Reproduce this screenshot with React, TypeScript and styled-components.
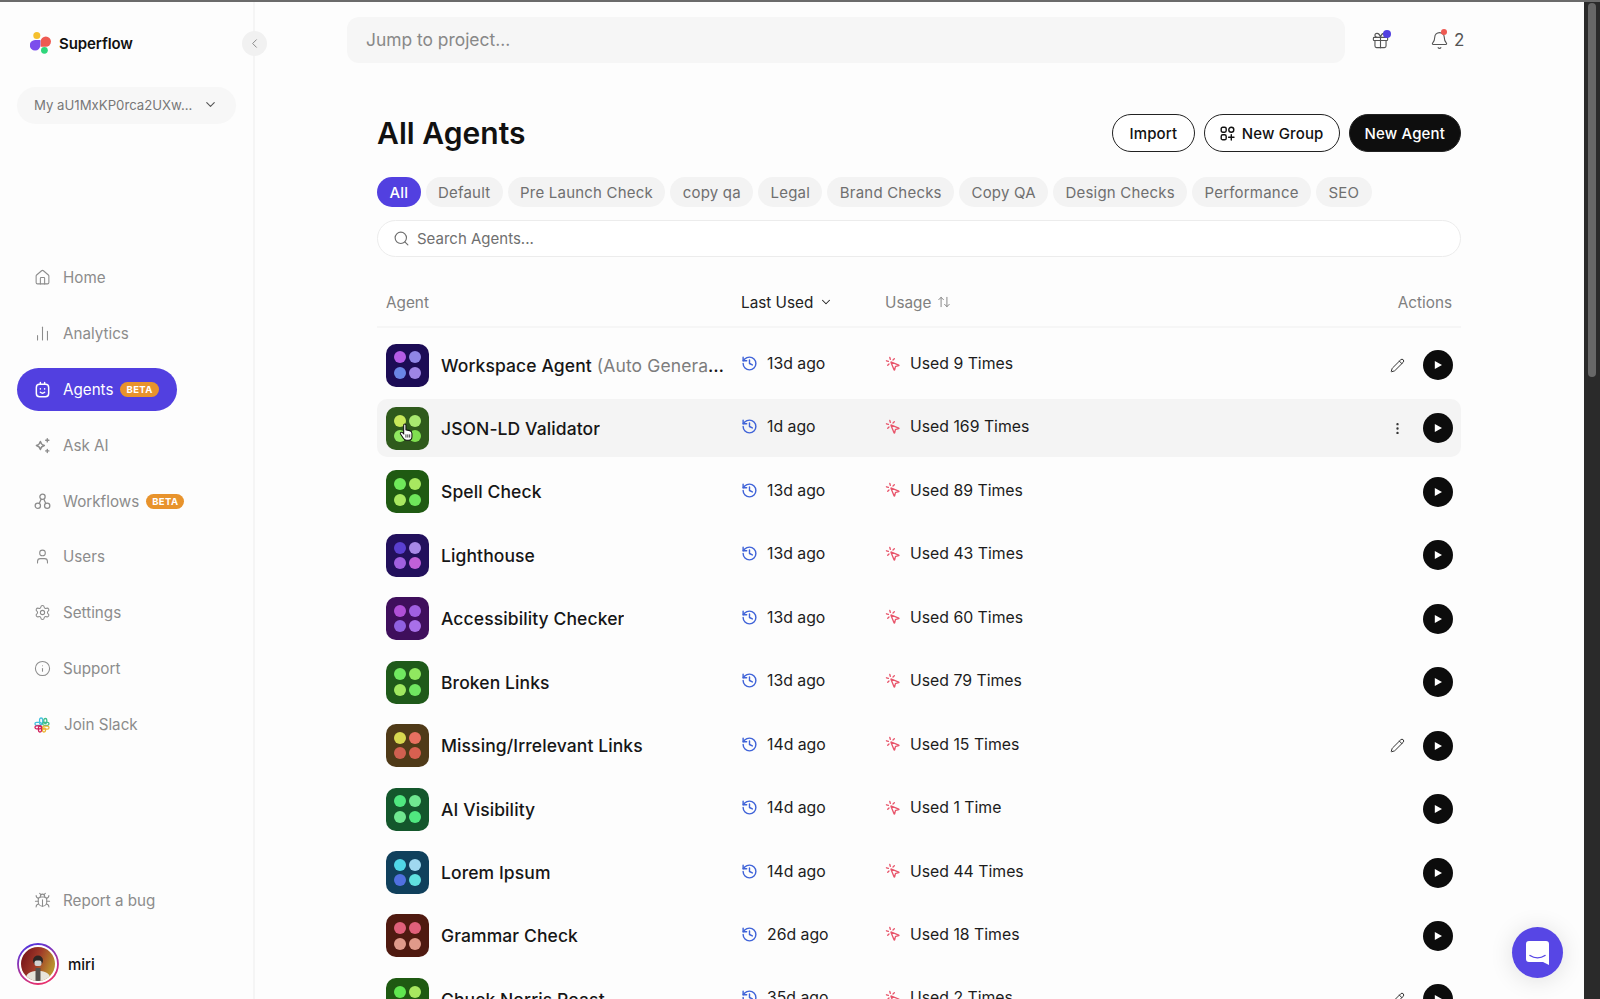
import React from 'react';
import styled, { createGlobalStyle } from 'styled-components';
import {
  House,
  ChartNoAxesColumn,
  User,
  Settings,
  Info,
  Bug,
  History,
  MousePointerClick,
  Pencil,
  EllipsisVertical,
  Search,
  ChevronDown,
  ChevronLeft,
  ArrowUpDown,
  Gift,
  Bell,
} from 'lucide-react';

const FONT = '"Inter", "Noto Sans", sans-serif';

const GlobalStyle = createGlobalStyle`
  html, body {
    margin: 0;
    height: 100%;
    overflow: hidden;
    background: #fdfdfd;
    font-family: ${FONT};
  }
  * { box-sizing: border-box; }
`;

const TopLine = styled.div`
  height: 2px;
  background: #6b6b6b;
`;

const Page = styled.div`
  display: flex;
  height: 997px;
  overflow: hidden;
`;

const Sidebar = styled.aside`
  position: relative;
  flex: 0 0 255px;
  display: flex;
  flex-direction: column;
  padding: 29px 0 14px 17px;
  border-right: 2px solid #f5f5f5;
`;

const Brand = styled.div`
  display: flex;
  align-items: center;
  gap: 7px;
  height: 24px;
  padding-left: 13px;
  font-size: 15px;
  font-weight: 600;
  letter-spacing: -0.1px;
  color: #111;
`;

const CollapseButton = styled.button`
  position: absolute;
  top: 29px;
  right: -14px;
  width: 25px;
  height: 25px;
  padding: 0;
  border: 0;
  border-radius: 50%;
  background: #f1f1f1;
  color: #8a8a8a;
  display: flex;
  align-items: center;
  justify-content: center;
`;

const WorkspaceSelect = styled.div`
  display: flex;
  align-items: center;
  justify-content: space-between;
  width: 219px;
  height: 37px;
  margin-top: 32px;
  padding: 0 18px 2px 17px;
  border-radius: 19px;
  background: #f7f7f7;
  font-size: 13.2px;
  color: #777;
`;

const Nav = styled.nav`
  display: flex;
  flex-direction: column;
  gap: 12.9px;
  margin-top: 132px;
`;

const NavItem = styled.div<{ $active?: boolean; $slack?: boolean }>`
  display: flex;
  align-items: center;
  gap: ${p => (p.$slack ? '14px' : '12px')};
  width: ${p => (p.$active ? '160px' : '219px')};
  height: 43px;
  padding-left: 17px;
  border-radius: 22px;
  font-size: 15.2px;
  color: ${p => (p.$active ? '#fff' : '#8c8c8c')};
  background: ${p => (p.$active ? '#5240e0' : 'transparent')};
`;

const BetaBadge = styled.span`
  display: inline-flex;
  align-items: center;
  height: 15px;
  margin-left: -5px;
  padding: 0 6px;
  border-radius: 8px;
  background: #e8932c;
  color: #fff;
  font-size: 9.5px;
  font-weight: 700;
  letter-spacing: 0.4px;
`;

const SideFooter = styled.div`
  margin-top: auto;
  display: flex;
  flex-direction: column;
  gap: 21px;
`;

const Profile = styled.div`
  display: flex;
  align-items: center;
  gap: 9px;
  font-size: 15px;
  font-weight: 500;
  color: #111;
`;

const Main = styled.main`
  flex: 1;
  min-width: 0;
  overflow: hidden;
`;

const TopBar = styled.div`
  display: flex;
  align-items: center;
  margin-top: 15px;
  padding-left: 92px;
`;

const JumpInput = styled.div`
  display: flex;
  align-items: center;
  width: 998px;
  height: 46px;
  padding: 0 0 2px 19px;
  border-radius: 12px;
  background: #f6f6f6;
  font-size: 17.4px;
  color: #888;
`;

const TopIcon = styled.div`
  position: relative;
  display: flex;
  align-items: center;
  color: #555;
`;

const GiftWrap = styled(TopIcon)`
  margin-left: 26px;
`;

const BellWrap = styled(TopIcon)`
  margin-left: 40px;
  gap: 5px;
  font-size: 17px;
`;

const Dot = styled.span<{ $color: string; $size: number }>`
  position: absolute;
  top: -1px;
  right: ${p => (p.$size > 7 ? '-1px' : 'auto')};
  left: ${p => (p.$size > 7 ? 'auto' : '11px')};
  width: ${p => p.$size}px;
  height: ${p => p.$size}px;
  border-radius: 50%;
  background: ${p => p.$color};
`;

const Content = styled.div`
  padding: 0 123px 0 122px;
`;

const HeaderRow = styled.div`
  display: flex;
  align-items: center;
  justify-content: space-between;
  margin-top: 51px;
`;

const Title = styled.h1`
  margin: 0;
  font-size: 30px;
  font-weight: 600;
  letter-spacing: 0.05px;
  color: #111;
`;

const ButtonRow = styled.div`
  display: flex;
  gap: 9px;
`;

const PillButton = styled.button<{ $dark?: boolean }>`
  display: flex;
  align-items: center;
  gap: 7px;
  height: 38px;
  padding: 0 15px;
  border: 1px solid #222;
  border-radius: 19px;
  background: ${p => (p.$dark ? '#0e0e0e' : '#fff')};
  color: ${p => (p.$dark ? '#fff' : '#111')};
  font-family: ${FONT};
  font-size: 15px;
  font-weight: 500;
  letter-spacing: 0.15px;
`;

const ImportButton = styled(PillButton)`
  padding: 0 16.5px;
`;

const Tabs = styled.div`
  display: flex;
  gap: 5px;
  margin-top: 25px;
`;

const Tab = styled.div<{ $active?: boolean }>`
  display: flex;
  align-items: center;
  height: 30px;
  padding: 0 12.4px;
  border-radius: 15px;
  background: ${p => (p.$active ? '#5240e0' : '#f3f3f3')};
  color: ${p => (p.$active ? '#fff' : '#6f6f6f')};
  font-size: 15px;
  letter-spacing: 0.2px;
  font-weight: ${p => (p.$active ? 500 : 400)};
`;

const SearchBox = styled.div`
  display: flex;
  align-items: center;
  gap: 7px;
  height: 37px;
  margin-top: 13px;
  padding-left: 15px;
  border: 1px solid #ececec;
  border-radius: 19px;
  background: #fff;
  font-size: 15px;
  color: #6f6f6f;
`;

const TableHead = styled.div`
  display: grid;
  grid-template-columns: 355px 144px 1fr auto;
  align-items: center;
  height: 50px;
  margin-top: 21px;
  padding: 0 9px;
  border-bottom: 2px solid #f6f6f6;
  font-size: 15.3px;
`;

const HeadCell = styled.div<{ $strong?: boolean }>`
  display: flex;
  align-items: center;
  gap: 6px;
  color: ${p => (p.$strong ? '#222' : '#808080')};
`;

const Rows = styled.div`
  display: flex;
  flex-direction: column;
  gap: 5.44px;
  margin-top: 8px;
`;

const Row = styled.div<{ $hover?: boolean }>`
  position: relative;
  display: grid;
  grid-template-columns: 355px 144px 1fr auto;
  align-items: center;
  flex: 0 0 58px;
  padding: 0 8px 0 9px;
  border-radius: 10px;
  background: ${p => (p.$hover ? '#f4f4f4' : 'transparent')};
`;

const AgentCell = styled.div`
  display: flex;
  align-items: center;
  gap: 12px;
  min-width: 0;
  padding-right: 16px;
`;

const AgentIcon = styled.div<{ $bg: string }>`
  flex: 0 0 43px;
  height: 43px;
  display: grid;
  grid-template-columns: 15.4px 15.4px;
  grid-auto-rows: 15.4px;
  place-content: center;
  border-radius: 10px;
  background: ${p => p.$bg};
`;

const IconDot = styled.span<{ $color: string }>`
  width: 12px;
  height: 12px;
  margin: 1.7px;
  border-radius: 50%;
  background: ${p => p.$color};
`;

const AgentName = styled.div`
  overflow: hidden;
  white-space: nowrap;
  text-overflow: ellipsis;
  font-size: 17.5px;
  font-weight: 500;
  letter-spacing: 0.1px;
  color: #161616;
`;

const AutoNote = styled.span`
  font-weight: 400;
  color: #7d7d7d;
`;

const Stat = styled.div<{ $tone: string }>`
  display: flex;
  align-items: center;
  gap: 9px;
  margin-top: -3px;
  font-size: 15.8px;
  color: #1c1c1c;
  svg { color: ${p => p.$tone}; flex: none; }
`;

const Actions = styled.div`
  display: flex;
  align-items: center;
  justify-content: flex-end;
  gap: 18px;
  color: #333;
`;

const PlayButton = styled.button`
  display: flex;
  align-items: center;
  justify-content: center;
  width: 30px;
  height: 30px;
  padding: 0;
  border: 0;
  border-radius: 50%;
  background: #0c0c0c;
`;

const Pointer = styled.svg`
  position: absolute;
  left: 22px;
  top: 24px;
`;

const ScrollTrack = styled.div`
  flex: 0 0 16px;
  padding: 1px 4px 0;
  background: #2a2a2a;
`;

const ScrollThumb = styled.div`
  height: 374px;
  border-radius: 4px;
  background: #676767;
`;

const ChatBubble = styled.div`
  position: absolute;
  left: 1512px;
  top: 927px;
  width: 51px;
  height: 51px;
  display: flex;
  align-items: center;
  justify-content: center;
  border-radius: 50%;
  background: #5746e5;
  box-shadow: 0 2px 24px rgba(0, 0, 0, 0.12);
`;

const Logo = () => (
  <svg width="22" height="22" viewBox="0 0 22 22">
    <circle cx="6.8" cy="3.6" r="3.5" fill="#f5c02e" />
    <path d="M10.600 9.600a5.200 5.200 0 1 1 5.200 5.200h-5.200z" fill="#ee5a52" />
    <path d="M10.400 8v5.300a5.300 5.300 0 1 1-5.300-5.300z" fill="#7c4dec" />
    <circle cx="14.400" cy="18.300" r="3.400" fill="#2fd67b" />
  </svg>
);

const AgentFace = () => (
  <svg width="17" height="17" viewBox="0 0 16 16" fill="none" stroke="currentColor" strokeWidth="1.4" strokeLinecap="round">
    <rect x="2.2" y="3" width="11.6" height="11.8" rx="3" />
    <path d="M6 1.3v1.7M10 1.3v1.7" />
    <path d="M6 10.6c1.2 1 2.8 1 4 0" />
    <path d="M6 7.4v.2M10 7.4v.2" />
  </svg>
);

const SparkIcon = () => (
  <svg width="17" height="17" viewBox="0 0 16 16" fill="none" stroke="currentColor" strokeWidth="1.3" strokeLinejoin="round" strokeLinecap="round">
    <path d="M6 4.200c.5 2.400 1.300 3.200 3.800 3.800-2.500.6-3.300 1.400-3.800 3.800-.5-2.400-1.300-3.200-3.800-3.800 2.500-.6 3.300-1.400 3.800-3.800z" />
    <path d="M12.500 1.600v3M11 3.100h3M12.500 11.600v3M11 13.100h3" />
  </svg>
);

const WorkflowIcon = () => (
  <svg width="17" height="17" viewBox="0 0 16 16" fill="none" stroke="currentColor" strokeWidth="1.2">
    <circle cx="8" cy="3.6" r="2.5" />
    <circle cx="3.6" cy="12" r="2.5" />
    <circle cx="12.4" cy="12" r="2.5" />
    <path d="M6.7 5.8 4.9 9.8M9.3 5.800l1.800 4" />
  </svg>
);

const SlackIcon = () => (
  <svg width="16" height="16" viewBox="0 0 16 16" fill="none" strokeWidth="1.3">
    <rect x="5.600" y="1" width="3" height="6.500" rx="1.500" stroke="#43c0dd" />
    <rect x="1" y="5.300" width="6.500" height="3" rx="1.500" stroke="#43c0dd" />
    <rect x="8.700" y="5.300" width="6.300" height="3" rx="1.500" stroke="#3ebd8c" />
    <rect x="9.800" y="1.500" width="3" height="5" rx="1.500" stroke="#3ebd8c" />
    <rect x="8.500" y="9.200" width="6.500" height="3" rx="1.500" stroke="#ecb22e" />
    <rect x="8.500" y="11" width="3" height="4" rx="1.500" stroke="#ecb22e" />
    <rect x="1" y="8.800" width="6.500" height="3" rx="1.500" stroke="#d11f5c" />
    <rect x="4.500" y="9" width="3" height="6" rx="1.500" stroke="#d11f5c" />
  </svg>
);

const Avatar = () => (
  <svg width="42" height="42" viewBox="0 0 42 42">
    <defs>
      <linearGradient id="ring" x1="0.2" y1="0" x2="0.6" y2="1">
        <stop offset="0" stopColor="#4f35e0" />
        <stop offset="1" stopColor="#e8306c" />
      </linearGradient>
      <linearGradient id="photo" x1="0" y1="0" x2="1" y2="0.4">
        <stop offset="0" stopColor="#6e0d16" />
        <stop offset="0.55" stopColor="#a03a28" />
        <stop offset="1" stopColor="#b9902e" />
      </linearGradient>
      <clipPath id="photoClip">
        <circle cx="21" cy="21" r="17" />
      </clipPath>
    </defs>
    <circle cx="21" cy="21" r="20" fill="#fff" stroke="url(#ring)" strokeWidth="1.8" />
    <circle cx="21" cy="21" r="17" fill="url(#photo)" />
    <g clipPath="url(#photoClip)">
      <path d="M8 40c0-9 4-12 13-12s13 3 13 12z" fill="#e8e4da" />
      <rect x="18.500" y="25" width="5" height="15" fill="#55504c" />
      <circle cx="21" cy="17.500" r="5" fill="#2e2624" />
      <rect x="17.500" y="17.500" width="7" height="5.500" rx="2" fill="#d2d2d2" />
    </g>
  </svg>
);

const GroupIcon = () => (
  <svg width="15" height="15" viewBox="0 0 15 15" fill="none" stroke="currentColor" strokeWidth="1.4" strokeLinecap="round">
    <rect x="1.2" y="1.2" width="5" height="5" rx="1.6" />
    <rect x="8.8" y="1.2" width="5" height="5" rx="2.5" />
    <rect x="1.2" y="8.8" width="5" height="5" rx="1.6" />
    <path d="M11.3 8.6v5.4M8.6 11.3H14" />
  </svg>
);

const PlayGlyph = () => (
  <svg width="10" height="10" viewBox="0 0 10 10">
    <path d="M1.8 1 9 5l-7.2 4z" fill="#fff" />
  </svg>
);

const HandPointer = () => (
  <Pointer width="15" height="19" viewBox="0 0 16 20">
    <path
      d="M5 2.200c0-1.600 2.400-1.600 2.400 0v5l4 .8c1.600.4 2.400 1.200 2.400 3v3.400c0 2.200-1.400 3.800-3.600 3.800H8c-1.400 0-2.400-.6-3.200-1.800L1.600 11.600c-.8-1.400 1-2.600 2.200-1.400L5 11.400z"
      fill="#fff"
      stroke="#111"
      strokeWidth="1.1"
    />
    <path d="M7.400 12v3.400M9.400 12v3.400M11.400 12v3.400" stroke="#111" strokeWidth="0.9" />
  </Pointer>
);

const ChatGlyph = () => (
  <svg width="25" height="26" viewBox="0 0 25 26">
    <path d="M4 1h17a3 3 0 0 1 3 3v21l-6-3H4a3 3 0 0 1-3-3V4a3 3 0 0 1 3-3z" fill="#fff" />
    <path d="M5 15.500c4.500 3 10.500 3 15 0" fill="none" stroke="#5746e5" strokeWidth="1.500" strokeLinecap="round" />
  </svg>
);

type NavEntry = { label: string; icon: React.ReactNode; beta?: boolean; active?: boolean; slack?: boolean };

const navIcon = { size: 17, strokeWidth: 1.5 };

const navEntries: NavEntry[] = [
  { label: 'Home', icon: <House {...navIcon} /> },
  { label: 'Analytics', icon: <ChartNoAxesColumn {...navIcon} /> },
  { label: 'Agents', icon: <AgentFace />, beta: true, active: true },
  { label: 'Ask AI', icon: <SparkIcon /> },
  { label: 'Workflows', icon: <WorkflowIcon />, beta: true },
  { label: 'Users', icon: <User {...navIcon} /> },
  { label: 'Settings', icon: <Settings {...navIcon} /> },
  { label: 'Support', icon: <Info {...navIcon} /> },
  { label: 'Join Slack', icon: <SlackIcon />, slack: true },
];

const tabs = ['All', 'Default', 'Pre Launch Check', 'copy qa', 'Legal', 'Brand Checks', 'Copy QA', 'Design Checks', 'Performance', 'SEO'];

type Agent = {
  name: string;
  note?: string;
  when: string;
  used: string;
  bg: string;
  dots: [string, string, string, string];
  action?: 'edit' | 'more';
};

const agents: Agent[] = [
  { name: 'Workspace Agent', note: ' (Auto Generated)', when: '13d ago', used: 'Used 9 Times', bg: '#1c0c55', dots: ['#b45ce6', '#8f86e5', '#6a85e5', '#9e85e5'], action: 'edit' },
  { name: 'JSON-LD Validator', when: '1d ago', used: 'Used 169 Times', bg: '#2f5a1c', dots: ['#c8e85a', '#a8e870', '#90e860', '#80e050'], action: 'more' },
  { name: 'Spell Check', when: '13d ago', used: 'Used 89 Times', bg: '#1f5a12', dots: ['#6fe85a', '#a8e860', '#a8e860', '#6fe85a'] },
  { name: 'Lighthouse', when: '13d ago', used: 'Used 43 Times', bg: '#22105c', dots: ['#5a3fd0', '#a888e8', '#a060e0', '#c060d8'] },
  { name: 'Accessibility Checker', when: '13d ago', used: 'Used 60 Times', bg: '#3f0f5c', dots: ['#b050d8', '#a060e0', '#9060e0', '#a870e8'] },
  { name: 'Broken Links', when: '13d ago', used: 'Used 79 Times', bg: '#1f5a1a', dots: ['#70e860', '#90e860', '#a0e860', '#70e860'] },
  { name: 'Missing/Irrelevant Links', when: '14d ago', used: 'Used 15 Times', bg: '#4f3a18', dots: ['#d8d850', '#e87060', '#d06050', '#d86050'], action: 'edit' },
  { name: 'AI Visibility', when: '14d ago', used: 'Used 1 Time', bg: '#14572c', dots: ['#50e880', '#70e890', '#70e890', '#50e880'] },
  { name: 'Lorem Ipsum', when: '14d ago', used: 'Used 44 Times', bg: '#10405c', dots: ['#50d8e8', '#a0d8f0', '#5070e0', '#60e0e0'] },
  { name: 'Grammar Check', when: '26d ago', used: 'Used 18 Times', bg: '#4f1a10', dots: ['#e0607a', '#e0607a', '#e09a8a', '#e09a8a'] },
  { name: 'Chuck Norris Roast', when: '35d ago', used: 'Used 2 Times', bg: '#1f5a12', dots: ['#60e850', '#a8e860', '#a8e860', '#60e850'], action: 'edit' },
];

export default function App() {
  return (
    <>
      <GlobalStyle />
      <TopLine />
      <Page>
        <Sidebar>
          <Brand>
            <Logo />
            Superflow
          </Brand>
          <CollapseButton>
            <ChevronLeft size={15} strokeWidth={1.6} />
          </CollapseButton>
          <WorkspaceSelect>
            <span>My aU1MxKP0rca2UXw...</span>
            <ChevronDown size={15} strokeWidth={1.8} color="#555" />
          </WorkspaceSelect>
          <Nav>
            {navEntries.map(item => (
              <NavItem key={item.label} $active={item.active} $slack={item.slack}>
                {item.icon}
                {item.label}
                {item.beta && <BetaBadge>BETA</BetaBadge>}
              </NavItem>
            ))}
          </Nav>
          <SideFooter>
            <NavItem>
              <Bug {...navIcon} />
              Report a bug
            </NavItem>
            <Profile>
              <Avatar />
              miri
            </Profile>
          </SideFooter>
        </Sidebar>
        <Main>
          <TopBar>
            <JumpInput>Jump to project...</JumpInput>
            <GiftWrap>
              <Gift size={19} strokeWidth={1.4} />
              <Dot $color="#5240e0" $size={8} />
            </GiftWrap>
            <BellWrap>
              <Bell size={19} strokeWidth={1.4} />
              <Dot $color="#ee5a52" $size={6} />
              2
            </BellWrap>
          </TopBar>
          <Content>
            <HeaderRow>
              <Title>All Agents</Title>
              <ButtonRow>
                <ImportButton>Import</ImportButton>
                <PillButton>
                  <GroupIcon />
                  New Group
                </PillButton>
                <PillButton $dark>New Agent</PillButton>
              </ButtonRow>
            </HeaderRow>
            <Tabs>
              {tabs.map((t, i) => (
                <Tab key={t} $active={i === 0}>
                  {t}
                </Tab>
              ))}
            </Tabs>
            <SearchBox>
              <Search size={17} strokeWidth={1.6} />
              Search Agents...
            </SearchBox>
            <TableHead>
              <HeadCell>Agent</HeadCell>
              <HeadCell $strong>
                Last Used
                <ChevronDown size={14} strokeWidth={1.8} />
              </HeadCell>
              <HeadCell>
                Usage
                <ArrowUpDown size={14} strokeWidth={1.6} />
              </HeadCell>
              <HeadCell>Actions</HeadCell>
            </TableHead>
            <Rows>
              {agents.map((a, i) => (
                <Row key={a.name} $hover={a.action === 'more'}>
                  <AgentCell>
                    <AgentIcon $bg={a.bg}>
                      {a.dots.map((d, j) => (
                        <IconDot key={j} $color={d} />
                      ))}
                    </AgentIcon>
                    <AgentName>
                      {a.name}
                      {a.note && <AutoNote>{a.note}</AutoNote>}
                    </AgentName>
                  </AgentCell>
                  <Stat $tone="#3f63d8">
                    <History size={17} strokeWidth={2} />
                    {a.when}
                  </Stat>
                  <Stat $tone="#e8546a">
                    <MousePointerClick size={16} strokeWidth={2} />
                    {a.used}
                  </Stat>
                  <Actions>
                    {a.action === 'edit' && <Pencil size={15} strokeWidth={1.6} />}
                    {a.action === 'more' && <EllipsisVertical size={15} strokeWidth={1.8} />}
                    <PlayButton>
                      <PlayGlyph />
                    </PlayButton>
                  </Actions>
                  {i === 1 && <HandPointer />}
                </Row>
              ))}
            </Rows>
          </Content>
        </Main>
        <ScrollTrack>
          <ScrollThumb />
        </ScrollTrack>
      </Page>
      <ChatBubble>
        <ChatGlyph />
      </ChatBubble>
    </>
  );
}
